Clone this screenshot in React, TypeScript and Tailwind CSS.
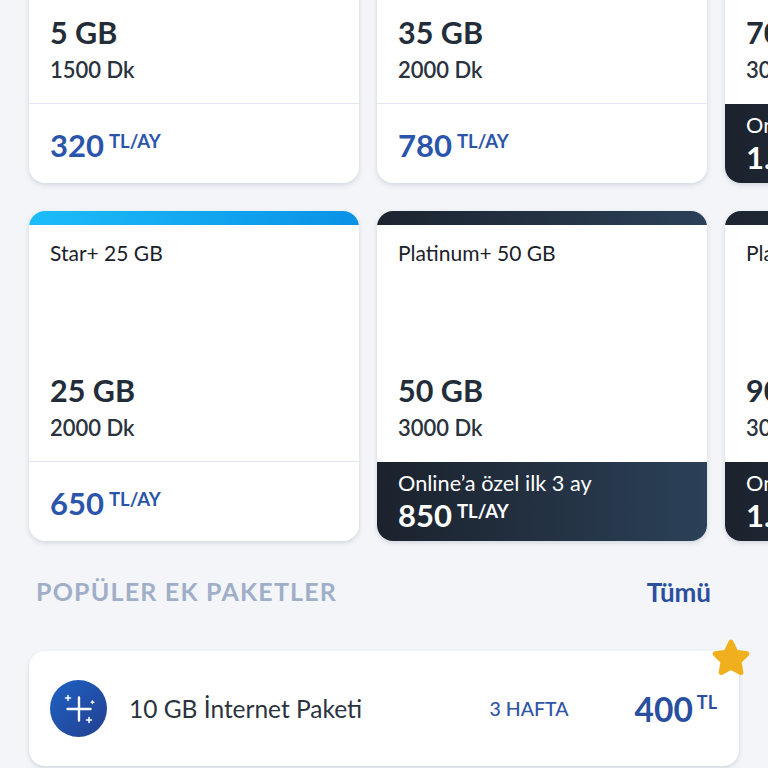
type CardProps = {
  title: string;
  gb: string;
  dk: string;
  price: string;
  tone: "star" | "plain" | "platinum";
  offer?: boolean;
};

function Card({ title, gb, dk, price, tone, offer }: CardProps) {
  const bar =
    tone === "star"
      ? "bg-gradient-to-r from-[#1cbcfb] to-[#0a92e6]"
      : tone === "platinum"
        ? "bg-gradient-to-r from-[#1c2430] to-[#2b4158]"
        : "bg-white";
  return (
    <div className="flex h-[330px] w-[330px] shrink-0 flex-col overflow-hidden rounded-[16px] bg-white shadow-[0_2px_5px_rgba(60,75,110,0.18)]">
      <div className={`h-[14px] shrink-0 ${bar}`} />
      <div className="flex flex-1 flex-col pl-[21px]">
        <div className="mt-[14px] text-[21px] leading-[28px] text-[#1b2129]">{title}</div>
        <div className="mt-auto text-[30.500px] font-bold leading-[36px] text-[#232d3a]">{gb}</div>
        <div className="mb-[19px] mt-[6px] text-[22px] font-semibold leading-[28px] text-[#2a323e]">{dk}</div>
      </div>
      {offer ? (
        <div className="flex h-[80px] shrink-0 flex-col border-t border-white bg-gradient-to-r from-[#1b222d] to-[#2b4158] pl-[21px] pt-[8px] text-white">
          <div className="text-[21.700px] leading-[27px]">Online’a özel ilk 3 ay</div>
          <div className="flex items-start">
            <span className="text-[31px] font-bold leading-[36px]">{price}</span>
            <span className="ml-[5px] mt-[2px] text-[18.500px] font-bold leading-[24px]">TL/AY</span>
          </div>
        </div>
      ) : (
        <div className="flex h-[80px] shrink-0 items-start border-t border-[#e4e6f3] pl-[21px] pt-[23px] text-[#2a55ab]">
          <span className="text-[31px] font-bold leading-[36px]">{price}</span>
          <span className="ml-[5px] mt-[2px] text-[18.500px] font-bold leading-[24px]">TL/AY</span>
        </div>
      )}
    </div>
  );
}

function Row({ cards }: { cards: CardProps[] }) {
  return (
    <div className="flex gap-[18px] pl-[29px]">
      {cards.map((c) => (
        <Card key={c.title} {...c} />
      ))}
    </div>
  );
}

export default function App() {
  return (
    <div className="h-[768px] w-[768px] overflow-hidden bg-[#f3f5f8] font-['Lato','Noto_Sans',sans-serif]">
      <div className="-mt-[147px] flex flex-col gap-[28px]">
        <Row
          cards={[
            { title: "Süper 5 GB", gb: "5 GB", dk: "1500 Dk", price: "320", tone: "plain" },
            { title: "Süper 35 GB", gb: "35 GB", dk: "2000 Dk", price: "780", tone: "plain" },
            { title: "Platinum+ 70 GB", gb: "70 GB", dk: "3000 Dk", price: "1.050", tone: "platinum", offer: true },
          ]}
        />
        <Row
          cards={[
            { title: "Star+ 25 GB", gb: "25 GB", dk: "2000 Dk", price: "650", tone: "star" },
            { title: "Platinum+ 50 GB", gb: "50 GB", dk: "3000 Dk", price: "850", tone: "platinum", offer: true },
            { title: "Platinum+ 90 GB", gb: "90 GB", dk: "3000 Dk", price: "1.250", tone: "platinum", offer: true },
          ]}
        />
      </div>

      <div className="mt-[34px] flex h-[34px] items-center justify-between pl-[36px] pr-[57px]">
        <div className="text-[25px] font-bold tracking-[1.2px] text-[#a0aec8]">POPÜLER EK PAKETLER</div>
        <div className="text-[26px] font-bold text-[#2a4f9f]">Tümü</div>
      </div>

      <div className="relative ml-[29px] mt-[42px] flex h-[115px] w-[710px] items-center rounded-[16px] bg-white pl-[21px] pr-[22px] shadow-[0_2px_4px_rgba(60,75,110,0.18)]">
        <div className="flex h-[57px] w-[57px] shrink-0 items-center justify-center rounded-full bg-gradient-to-br from-[#1c62c4] to-[#22408f]">
          <svg width="36" height="36" viewBox="0 0 36 36" fill="none" stroke="white" strokeLinecap="round">
            <path d="M18 6.500v23M6.500 18h23" strokeWidth="2.400" />
            <path d="M7 4.500v5M4.500 7h5" strokeWidth="1.500" />
            <path d="M31.500 10v2.500M30.200 11.200h2.600" strokeWidth="1.400" />
            <path d="M28 26.500v5M25.500 29h5" strokeWidth="1.600" />
          </svg>
        </div>
        <div className="ml-[22px] mt-[2px] text-[24.500px] text-[#2a3340]">10 GB İnternet Paketi</div>
        <div className="ml-auto text-[19.500px] font-medium text-[#2f55a5]">3 HAFTA</div>
        <div className="ml-[66px] flex items-start text-[#2a4f9f]">
          <span className="text-[33.500px] font-bold leading-[36px]">400</span>
          <span className="ml-[4px] text-[18px] font-bold leading-[22px]">TL</span>
        </div>
        <svg className="absolute -top-[15px] right-[-13px]" width="42" height="44" viewBox="0 0 40 42">
          <path
            d="M20 6l4.500 9.500 10.500 1.500-7.500 7.300 1.800 10.400L20 29.800l-9.300 4.900 1.800-10.400L5 17l10.500-1.500z"
            fill="#f0b01e"
            stroke="#f0b01e"
            strokeWidth="5"
            strokeLinejoin="round"
          />
        </svg>
      </div>
    </div>
  );
}
